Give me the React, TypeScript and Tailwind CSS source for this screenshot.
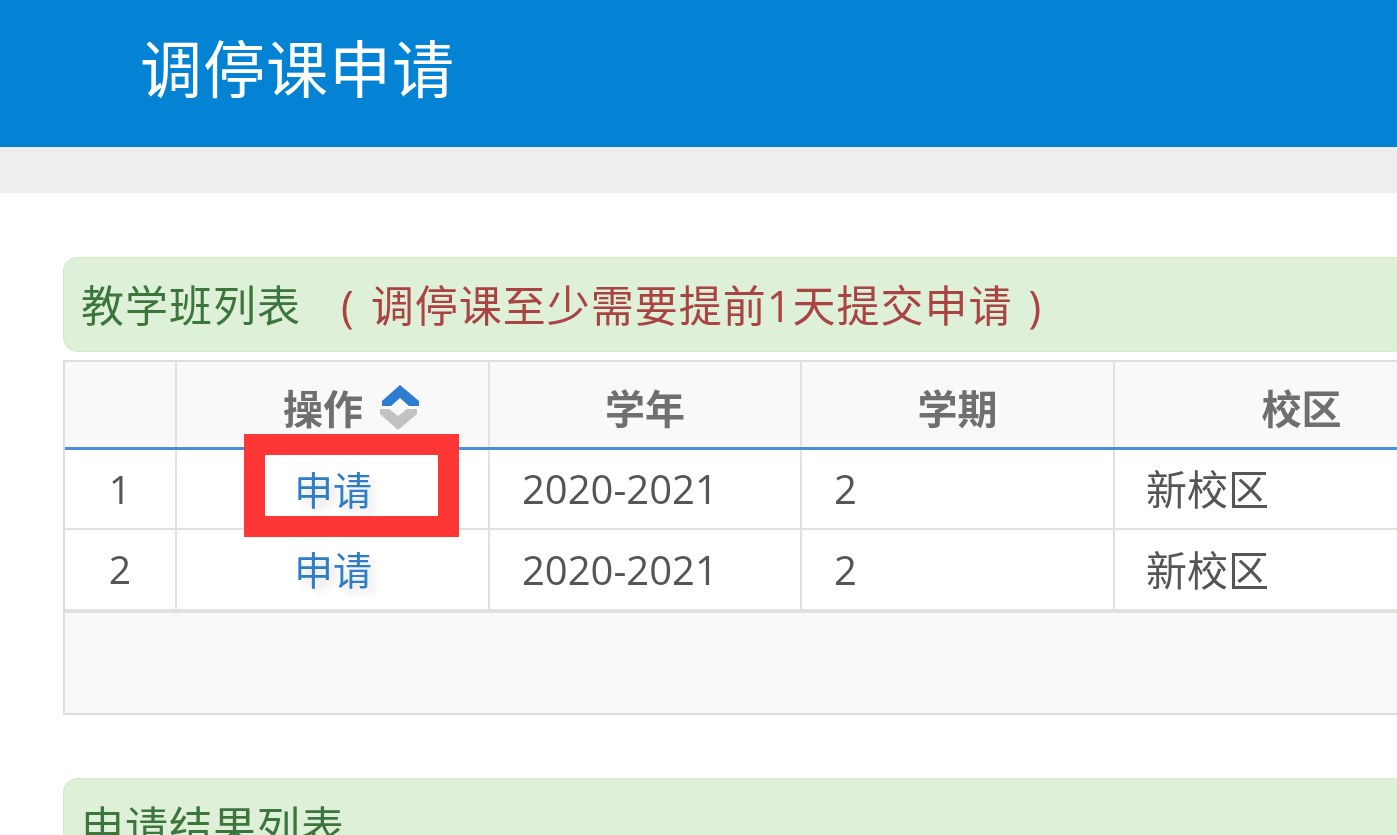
const font = { fontFamily: '"Open Sans", "Noto Sans CJK SC", sans-serif' };

const columns = [
  { label: "学年", width: "w-[312px]" },
  { label: "学期", width: "w-[313px]" },
  { label: "校区", width: "w-[375px]" },
];

const rows = [
  { no: "1", year: "2020-2021", term: "2", campus: "新校区" },
  { no: "2", year: "2020-2021", term: "2", campus: "新校区" },
];

function SortIcon() {
  return (
    <svg width="40" height="48" viewBox="0 0 40 48" className="ml-[17px] shrink-0">
      <path d="M20 2 L39 18 L39 23 L29 23 L20 15 L11 23 L2 23 L2 18 Z" fill="#2f7dd1" />
      <path d="M0 26 L9 26 L18 33 L27 26 L37 26 L37 31 L18 47 L0 31 Z" fill="#c2c2c2" />
    </svg>
  );
}

export default function App() {
  return (
    <div
      className="relative w-[1397px] h-[835px] overflow-hidden bg-white text-[#555] blur-[0.7px]"
      style={font}
    >
      <div className="h-[147px] bg-[#0483d4] pl-[140px] flex items-center">
        <h1 className="text-[62px] tracking-[1px] text-white leading-none pb-[10px]">调停课申请</h1>
      </div>
      <div className="h-[46px] bg-[#eeeeee]" />

      <div className="pl-[63px] pt-[64px]">
        <div className="h-[95px] w-[1400px] rounded-l-[14px] bg-[#dff0d8] border border-[#d6e9c6] pl-[17px] pt-[4px] flex items-center text-[43px] tracking-[1px] whitespace-nowrap">
          <span className="text-[#3c763d]">教学班列表</span>
          <span className="ml-[40px] text-[#a94442] whitespace-pre [word-spacing:4px]">( 调停课至少需要提前1天提交申请 )</span>
        </div>

        <div className="mt-[8px] w-[1400px] border-2 border-r-0 border-[#dddddd] text-[39px]">
          {/* header row */}
          <div className="flex h-[88px] bg-[#f9f9f9] border-b-[3px] border-[#4a90d9] text-[#6f6f6f] font-semibold text-[40px]">
            <div className="w-[112px] shrink-0 border-r-2 border-[#e2e2dc]" />
            <div className="w-[313px] shrink-0 border-r-2 border-[#e2e2dc] flex items-center pl-[106px] pt-[4px]">
              <span className="pt-[4px]">操作</span>
              <SortIcon />
            </div>
            {columns.map((c) => (
              <div key={c.label} className={`${c.width} shrink-0 border-r-2 border-[#e2e2dc] flex items-center justify-center pt-[8px]`}>
                {c.label}
              </div>
            ))}
          </div>

          {rows.map((r, i) => (
            <div
              key={r.no}
              className={`flex bg-white text-[#555] border-[#e2e2dc] ${i === 0 ? "h-[80px] border-b-2" : "h-[83px] border-b-[4px]"}`}
            >
              <div className="w-[112px] shrink-0 border-r-2 border-[#e2e2dc] flex items-center justify-center">{r.no}</div>
              <div className="w-[313px] shrink-0 border-r-2 border-[#e2e2dc] flex items-center pl-[117px] pt-[2px] text-[#2f7dc4] [text-shadow:6px_6px_8px_rgba(0,0,0,0.12)]">
                申请
              </div>
              <div className="w-[312px] shrink-0 border-r-2 border-[#e2e2dc] flex items-center pl-[32px] text-[40px]">{r.year}</div>
              <div className="w-[313px] shrink-0 border-r-2 border-[#e2e2dc] flex items-center pl-[32px] text-[40px]">{r.term}</div>
              <div className="w-[375px] shrink-0 flex items-center pl-[31px] pt-[2px] text-[41px]">{r.campus}</div>
            </div>
          ))}

          <div className="h-[100px] bg-[#f9f9f9]" />
        </div>

        <div className="mt-[63px] h-[95px] w-[1400px] rounded-l-[14px] bg-[#dff0d8] border border-[#d6e9c6] pl-[17px] pt-[4px] flex items-center text-[43px] tracking-[1px] text-[#3c763d]">
          申请结果列表
        </div>
      </div>

      {/* red highlight drawn over the screenshot */}
      <div className="absolute left-[244px] top-[434px] w-[215px] h-[103px] border-[21px] border-[#ff3636]" />
    </div>
  );
}
